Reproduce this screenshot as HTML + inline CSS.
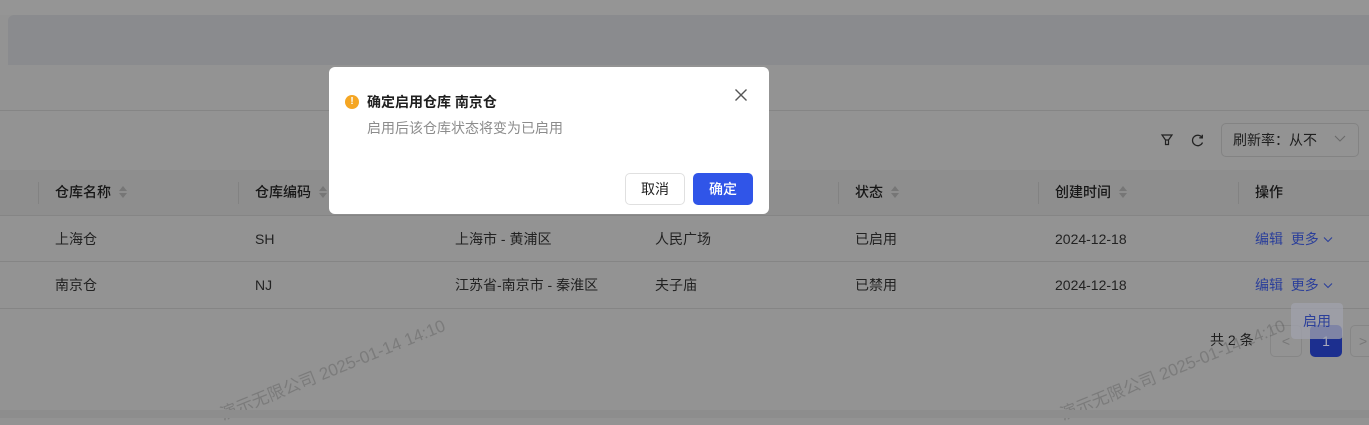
<!DOCTYPE html>
<html><head><meta charset="utf-8"><style>
*{box-sizing:border-box;margin:0;padding:0}
body{width:1369px;height:418px;overflow:hidden;background:#939393;font-family:"Liberation Sans","Noto Sans CJK SC",sans-serif;font-size:14px;color:#1f1f1f;position:relative}
.abs{position:absolute}
.band1{left:0;top:0;width:1369px;height:15px;background:#959595}
.band2{left:8px;top:15px;width:1361px;height:50px;background:#8a8b8e;border-top-left-radius:6px}
.hline{left:0;width:1369px;height:1px;background:#858585}
.thead{left:0;top:170px;width:1369px;height:45px;background:#8e8e8e}
.th{top:170px;height:45px;line-height:45px;font-weight:500;color:#161616}
.sep{top:182px;width:1px;height:22px;background:#828282}
.td{line-height:20px;color:#222}
.sort{display:inline-block;vertical-align:middle;margin-left:8px;width:8px;height:14px;position:relative;top:-1px}
.sort:before,.sort:after{content:"";position:absolute;left:0;border-left:4px solid transparent;border-right:4px solid transparent}
.sort:before{top:1px;border-bottom:5px solid #767676}
.sort:after{top:8px;border-top:5px solid #767676}
.link{color:#2b3f9a}
.modal{left:329px;top:67px;width:440px;height:147px;background:#fff;border-radius:6px}
.wm{color:rgba(70,70,70,.3);font-size:17px;transform:rotate(-22deg);transform-origin:left bottom;white-space:nowrap}
</style></head><body>
<div class="abs band1"></div>
<div class="abs band2"></div>
<div class="abs hline" style="top:110px"></div>

<svg class="abs" style="left:1160px;top:133px" width="14" height="14" viewBox="0 0 14 14" fill="none" stroke="#222" stroke-width="1.2"><path d="M2 2h10l-3.5 5v4.5h-3V7z"/><path d="M5.5 7h3"/></svg>
<svg class="abs" style="left:1190px;top:133px" width="15" height="15" viewBox="0 0 15 15" fill="none" stroke="#222" stroke-width="1.3"><path d="M12 4.5A5.2 5.2 0 1 0 12.5 9.5"/><path d="M12.3 1.8v3h-3"/></svg>
<div class="abs" style="left:1221px;top:123px;width:138px;height:34px;border:1px solid #838383;border-radius:5px;background:#939393;line-height:32px;padding-left:11px;color:#1f1f1f">刷新率：从不</div>
<svg class="abs" style="left:1334px;top:135px" width="12" height="8" viewBox="0 0 12 8" fill="none" stroke="#6a6a6a" stroke-width="1.1"><path d="M1 1l5 5 5-5"/></svg>

<div class="abs thead"></div>
<div class="abs sep" style="left:38px"></div>
<div class="abs sep" style="left:238px"></div>
<div class="abs sep" style="left:838px"></div>
<div class="abs sep" style="left:1038px"></div>
<div class="abs sep" style="left:1238px"></div>
<div class="abs th" style="left:55px">仓库名称<span class="sort"></span></div>
<div class="abs th" style="left:255px">仓库编码<span class="sort"></span></div>
<div class="abs th" style="left:855px">状态<span class="sort"></span></div>
<div class="abs th" style="left:1055px">创建时间<span class="sort"></span></div>
<div class="abs th" style="left:1255px">操作</div>
<div class="abs hline" style="top:215px"></div>
<div class="abs hline" style="top:261px"></div>
<div class="abs hline" style="top:308px"></div>

<div class="abs td" style="left:55px;top:229px">上海仓</div>
<div class="abs td" style="left:255px;top:229px">SH</div>
<div class="abs td" style="left:455px;top:229px">上海市 - 黄浦区</div>
<div class="abs td" style="left:655px;top:229px">人民广场</div>
<div class="abs td" style="left:855px;top:229px">已启用</div>
<div class="abs td" style="left:1055px;top:229px">2024-12-18</div>
<div class="abs td link" style="left:1255px;top:229px">编辑&nbsp; 更多</div>
<svg class="abs" style="left:1323px;top:236px" width="10" height="7" viewBox="0 0 10 7" fill="none" stroke="#2b3f9a" stroke-width="1.1"><path d="M1 1.5l4 4 4-4"/></svg>

<div class="abs td" style="left:55px;top:275px">南京仓</div>
<div class="abs td" style="left:255px;top:275px">NJ</div>
<div class="abs td" style="left:455px;top:275px">江苏省-南京市 - 秦淮区</div>
<div class="abs td" style="left:655px;top:275px">夫子庙</div>
<div class="abs td" style="left:855px;top:275px">已禁用</div>
<div class="abs td" style="left:1055px;top:275px">2024-12-18</div>
<div class="abs td link" style="left:1255px;top:275px">编辑&nbsp; 更多</div>
<svg class="abs" style="left:1323px;top:282px" width="10" height="7" viewBox="0 0 10 7" fill="none" stroke="#2b3f9a" stroke-width="1.1"><path d="M1 1.5l4 4 4-4"/></svg>

<div class="abs" style="left:1210px;top:330px;line-height:20px">共 2 条</div>
<div class="abs" style="left:1270px;top:325px;width:32px;height:32px;border:1px solid #868686;border-radius:5px;color:#777;text-align:center;line-height:30px">&lt;</div>
<div class="abs" style="left:1310px;top:325px;width:32px;height:32px;background:#1c2f8f;border-radius:5px;color:#aab;text-align:center;line-height:32px">1</div>
<div class="abs" style="left:1350px;top:325px;width:32px;height:32px;border:1px solid #868686;border-radius:5px;color:#777;line-height:30px;padding-left:8px">&gt;</div>
<div class="abs" style="left:1291px;top:303px;width:52px;height:36px;background:rgba(160,162,172,.75);border-radius:4px;color:#2b3f9a;text-align:center;line-height:36px">启用</div>

<div class="abs wm" style="left:225px;top:400px">演示无限公司 2025-01-14 14:10</div>
<div class="abs wm" style="left:1065px;top:400px">演示无限公司 2025-01-14 14:10</div>
<div class="abs" style="left:0;top:410px;width:1369px;height:8px;background:#8d8d8d"></div>

<div class="abs modal">
  <div class="abs" style="left:16px;top:28px;width:14px;height:14px;border-radius:50%;background:#f5a623;color:#fff;font-size:10px;font-weight:bold;text-align:center;line-height:14px">!</div>
  <div class="abs" style="left:38px;top:25px;font-weight:bold;font-size:14px;line-height:20px;color:#1f1f1f">确定启用仓库 南京仓</div>
  <div class="abs" style="left:38px;top:51px;font-size:14px;line-height:20px;color:#8c8c8c">启用后该仓库状态将变为已启用</div>
  <svg class="abs" style="left:405px;top:21px" width="14" height="14" viewBox="0 0 14 14" stroke="#555" stroke-width="1.4"><path d="M1.5 1.5l11 11M12.5 1.5l-11 11"/></svg>
  <div class="abs" style="left:296px;top:106px;width:60px;height:32px;border:1px solid #e0e0e0;border-radius:5px;text-align:center;line-height:30px;color:#222">取消</div>
  <div class="abs" style="left:364px;top:106px;width:60px;height:32px;background:#3055e8;border-radius:5px;text-align:center;line-height:32px;color:#fff;font-weight:500">确定</div>
</div>
</body></html>
